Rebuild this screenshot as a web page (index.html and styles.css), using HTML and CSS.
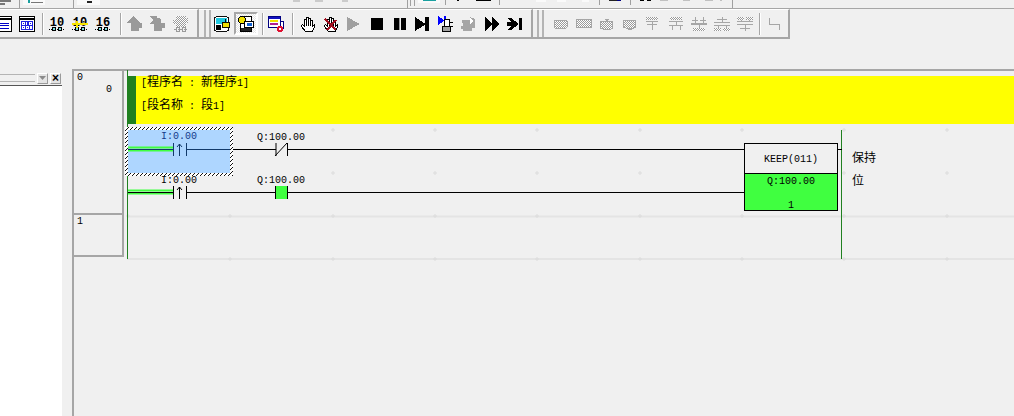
FILE: index.html
```html
<!DOCTYPE html>
<html lang="zh">
<head>
<meta charset="utf-8">
<title>Ladder</title>
<link rel="stylesheet" href="styles.css">
</head>
<body>
<svg width="0" height="0" class="defs">
  <defs>
    <g id="glasses">
      <path d="M0 13.500h16" stroke="#000" stroke-dasharray="1 1"/>
      <circle cx="5" cy="13" r="2" fill="#7fe0e0" stroke="#000"/>
      <circle cx="11" cy="13" r="2" fill="#7fe0e0" stroke="#000"/>
    </g>
    <g id="glasses-grey">
      <path d="M1 13h14" stroke="#9a9a9a" stroke-dasharray="1 1"/>
      <circle cx="5" cy="13.500" r="2" fill="none" stroke="#9a9a9a"/>
      <circle cx="11" cy="13.500" r="2" fill="none" stroke="#9a9a9a"/>
    </g>
    <g id="hand">
      <path d="M5.500 15.500L1.500 10.500V9.500L2.500 8.500L4.500 10.500V3.500H6.500V9.500V1.500H8.500V9.500V2.500H10.500V9.500V4.500H12.500V10.500L14.500 8.500V10.500L12.500 15.500z" fill="#fff" stroke="#000"/>
    </g>
    <pattern id="chk" width="2" height="2" patternUnits="userSpaceOnUse">
      <rect width="2" height="2" fill="#fff"/>
      <rect width="1" height="1" fill="#9a9a9a"/>
      <rect x="1" y="1" width="1" height="1" fill="#9a9a9a"/>
    </pattern>
    <pattern id="hatch" width="4" height="4" patternUnits="userSpaceOnUse">
      <rect width="4" height="4" fill="#fff"/>
      <path d="M0 4L4 0M-1 1L1 -1M3 5L5 3" stroke="#111" stroke-width="1"/>
    </pattern>
  </defs>
</svg>

<div class="top-strip">
  <svg class="top-bits" width="1014" height="8" viewBox="0 0 1014 8">
    <path d="M0 1h11M0 4h5" stroke="#000"/>
    <path d="M19.500 0v8M73.500 0v8M407.500 0v8" stroke="#a0a0a0"/>
    <rect x="23" y="0" width="22" height="5" fill="#fafafa"/>
    <rect x="28" y="0" width="2" height="3" fill="#1aa0a0"/>
    <rect x="31" y="2" width="12" height="1" fill="#777"/>
    <rect x="77" y="0" width="23" height="5" fill="#fafafa"/>
    <rect x="87" y="1" width="5" height="2" fill="#222"/>
    <path d="M293 1h7M315 1h8M342 1h6" stroke="#a6a6a6"/>
    <path d="M410.500 0v6M414.500 0v6" stroke="#a0a0a0"/>
    <rect x="418" y="0" width="22" height="3" fill="#fafafa"/>
    <rect x="423" y="0" width="13" height="1" fill="#1aa0a0"/>
    <path d="M445.500 0v5M499.500 0v5M599.500 0v5M630.500 0v5" stroke="#a0a0a0"/>
    <rect x="457" y="0" width="2" height="1" fill="#000"/>
    <rect x="476" y="0" width="15" height="1" fill="#000"/>
    <path d="M536 1h10M557 1h9M582 1h7" stroke="#fafafa" stroke-width="2"/>
    <rect x="609" y="0" width="8" height="1" fill="#222"/>
    <rect x="617" y="0" width="4" height="1" fill="#000080"/>
    <rect x="640" y="0" width="4" height="1" fill="#000"/>
    <rect x="647" y="0" width="4" height="1" fill="#000"/>
    <path d="M660 0h8M683 0h7M705 0h8M720 0h2" stroke="#c0c0c0" stroke-width="2"/>
    <path d="M732.500 0v8" stroke="#a0a0a0"/>
  </svg>
</div>

<div class="toolbars">
  <div class="tb tb-a">
    <div class="cluster first">
      <svg class="ic" viewBox="0 0 16 16"><rect x=".5" y=".5" width="15" height="15" fill="#fff" stroke="#000"/><path d="M1 3h14" stroke="#000" stroke-width="2"/><path d="M3 7.500h10M3 9.500h10M3 12.500h10" stroke="#0000c8"/></svg>
      <svg class="ic" viewBox="0 0 16 16"><rect x=".5" y=".5" width="15" height="15" fill="#fff" stroke="#000"/><path d="M1 3h14" stroke="#000" stroke-width="2"/><rect x="2" y="5" width="12" height="9" fill="#2020e0"/><path d="M3.500 6.500h2v2h-2zM7.500 6v3M10.500 6.500h2v2h-2zM3.500 10.500h2v2h-2zM7.500 10.500h2v2h-2zM11.500 10.500h1v2h-1z" stroke="#fff" fill="none"/></svg>
    </div>
    <span class="sep l7"></span>
    <div class="cluster r5">
      <svg class="ic" viewBox="0 0 16 16"><text x="8" y="9.500" class="num">10</text><use href="#glasses"/></svg>
      <svg class="ic" viewBox="0 0 16 16"><text x="8" y="9.500" class="num">10</text><use href="#glasses"/><path d="M0 8h16M5 5v7" stroke="#f5e400" stroke-width="2"/></svg>
      <svg class="ic" viewBox="0 0 16 16"><text x="8" y="9.500" class="num">16</text><use href="#glasses"/></svg>
    </div>
    <span class="sep l9"></span>
    <div class="cluster r5">
      <svg class="ic" viewBox="0 0 16 16"><path d="M6 0l7 6-1 1h3v5h-3v3H4V7H0z" fill="#9a9a9a"/></svg>
      <svg class="ic" viewBox="0 0 16 16"><path d="M0 0h7v2h3l1 2v3h4v5h-3v3H4V8H0l3-4z" fill="#9a9a9a"/></svg>
      <svg class="ic" viewBox="0 0 16 16"><path d="M3 0h10v2h2v5h-2v4H3V8H0V4h3z" fill="url(#chk)"/><use href="#glasses-grey"/></svg>
    </div>
  </div>

  <div class="tb tb-b">
    <span class="grips"></span>
    <svg class="ic" viewBox="0 0 17 16"><rect x=".5" y=".5" width="15" height="15" rx="2" fill="#fff" stroke="#000"/><rect x="2" y="2" width="12" height="6" fill="#20c8e0"/><path d="M2 9h5v5H2z" fill="#000"/><rect x="9" y="6" width="7" height="6" fill="#f0e000" stroke="#000"/><path d="M12 6V3" stroke="#000"/></svg>
    <span class="pressed">
      <svg class="ic" viewBox="0 0 16 16"><rect x="2.500" y=".5" width="11" height="15" fill="#fff" stroke="#000"/><circle cx="4" cy="4" r="3.500" fill="#f0e000" stroke="#000"/><rect x="6.500" y="5.500" width="9" height="6" fill="#fff" stroke="#000"/><rect x="9" y="7" width="5" height="3" fill="#1060d0"/><path d="M3 12h10v3H3z" fill="#222"/></svg>
    </span>
    <span class="sep l4"></span>
    <svg class="ic icon-db" viewBox="0 0 16 16"><rect x=".5" y=".5" width="12" height="11" fill="#fff" stroke="#000080"/><rect x="1" y="1" width="11" height="2" fill="#1010c0"/><rect x="2" y="4" width="8" height="2" fill="#f0e000"/><rect x="2" y="7" width="8" height="2" fill="#b02090"/><rect x="12.500" y="5.500" width="3" height="7" fill="#fff" stroke="#000080"/><circle cx="12" cy="13" r="3" fill="#e01030"/><path d="M11 12l2 2M13 12l-2 2" stroke="#fff"/></svg>
    <span class="sep l8"></span>
    <div class="cluster r-none">
      <svg class="ic" viewBox="0 0 16 16"><use href="#hand"/></svg>
      <svg class="ic" viewBox="0 0 16 16"><use href="#hand"/><path d="M2 3l11 11M13 4L4 14" stroke="#a01020" stroke-width="2"/></svg>
      <svg class="ic" viewBox="0 0 16 16"><path d="M1 1l13 7-13 7z" fill="#a0a0a0"/></svg>
      <svg class="ic" viewBox="0 0 16 16"><rect x="2" y="2" width="12" height="12" fill="#000"/></svg>
      <svg class="ic" viewBox="0 0 16 16"><rect x="2" y="2" width="5" height="12" fill="#000"/><rect x="9" y="2" width="5" height="12" fill="#000"/><path d="M7.500 2v12" stroke="#999"/></svg>
      <svg class="ic" viewBox="0 0 16 16"><path d="M0 1l10 6.500V1h4v14h-4V9L0 15z" fill="#000"/></svg>
      <svg class="ic" viewBox="0 0 16 16"><path d="M0 0l6 4v-4h2v9H6V5l-6 4z" fill="#0000ff"/><path d="M6.500 3.500h5v10h-5z" fill="#fff" stroke="#000"/><rect x="4" y="10" width="8" height="5" fill="#a0a0a0" stroke="#000"/><path d="M12 6h3M12 10h3" stroke="#000"/></svg>
      <svg class="ic" viewBox="0 0 16 16"><path d="M1 4h8V1l5 2v9h-3v3H2v-2H0v-3h2z" fill="#a6a6a6"/><path d="M9 2l3 3-3 3z" fill="#fff"/></svg>
      <svg class="ic" viewBox="0 0 16 16"><path d="M1 1l7 7-7 7zM8 1l7 7-7 7z" fill="#000"/></svg>
      <svg class="ic" viewBox="0 0 16 16"><path d="M0 2h4l8 6-8 6H0l5-4H0V6h5z" fill="#000"/><rect x="12" y="2" width="3" height="12" fill="#000"/></svg>
    </div>
  </div>

  <div class="tb tb-c">
    <span class="grips"></span>
    <div class="cluster first-c">
      <svg class="ic" viewBox="0 0 16 16"><rect x="1" y="4" width="13" height="8" rx="1" fill="url(#chk)" stroke="#a6a6a6"/></svg>
      <svg class="ic" viewBox="0 0 16 16"><rect x="0.500" y="3.500" width="15" height="8" rx="1" fill="url(#chk)" stroke="#a6a6a6"/></svg>
      <svg class="ic" viewBox="0 0 16 16"><rect x="1.500" y="5" width="12" height="8" rx="2" fill="url(#chk)" stroke="#a6a6a6"/><path d="M5 3h5l-2 2z" fill="#a6a6a6"/></svg>
      <svg class="ic" viewBox="0 0 16 16"><rect x="1.500" y="4" width="12" height="8" rx="2" fill="url(#chk)" stroke="#a6a6a6"/><path d="M5 14h5l-2-2z" fill="#a6a6a6"/></svg>
      <svg class="ic" viewBox="0 0 16 16"><rect x="1" y="1" width="12" height="3" fill="url(#chk)"/><path d="M1 5.500h12M2 8.500h10M7 5v9" stroke="#a6a6a6"/></svg>
      <svg class="ic" viewBox="0 0 16 16"><rect x="2" y="1" width="12" height="3" fill="url(#chk)"/><path d="M1 5.500h14M1 9.500h14M8 5v5M4 10v4M12 10v4" stroke="#a6a6a6"/></svg>
      <svg class="ic" viewBox="0 0 16 16"><path d="M4 1v6M12 1v6M1 4h6M9 4h6" stroke="#a6a6a6"/><rect x="0" y="6.500" width="16" height="2" fill="#a6a6a6"/><path d="M8 8v4" stroke="#a6a6a6"/><rect x="2" y="12" width="12" height="3" fill="url(#chk)"/></svg>
      <svg class="ic" viewBox="0 0 16 16"><path d="M8 1v5M3 3.500h10M0 6.500h16M0 9h16M4 9v3M12 9v3" stroke="#a6a6a6"/><rect x="0" y="12" width="7" height="3" fill="url(#chk)"/><rect x="9" y="12" width="7" height="3" fill="url(#chk)"/></svg>
      <svg class="ic" viewBox="0 0 16 16"><rect x="0" y="1" width="7" height="3" fill="url(#chk)"/><rect x="9" y="1" width="7" height="3" fill="url(#chk)"/><path d="M0 5.500h16M0 8.500h16M8 9v6M3 12.500h10M4 4v1M12 4v1" stroke="#a6a6a6"/></svg>
    </div>
    <span class="sep l6"></span>
    <svg class="ic icon-corner" viewBox="0 0 16 16"><path d="M2.500 2v6.500h9.500V14" fill="none" stroke="#a6a6a6"/></svg>
  </div>
</div>

<main class="workspace">
  <aside class="side">
    <div class="side-head">
      <span class="side-grip"></span>
      <span class="side-btn">
        <svg width="7" height="4" viewBox="0 0 7 4"><path d="M0 0h7L3.500 4z" fill="#8a8a8a"/></svg>
      </span>
      <span class="side-btn side-close">×</span>
    </div>
    <div class="side-body"></div>
  </aside>

  <div class="rows">
    <div class="row-head row-0">
      <span class="rung-no">0</span>
      <span class="step-no">0</span>
    </div>
    <div class="row-head row-1">
      <span class="rung-no">1</span>
    </div>
  </div>

  <svg class="ladder" width="890" height="347" viewBox="124 69 890 347">
    <path d="M124 70H1014" stroke="#a6a6a6" stroke-width="2"/>
    <!-- grid -->
    <path d="M127 216.500H1014M127 259H1014" class="grid-line" stroke-width="2"/>
    <path class="grid-mark" d="M128 128v4M126 130h4M230 128v4M228 130h4M333 128v4M331 130h4M435 128v4M433 130h4M537 128v4M535 130h4M640 128v4M638 130h4M742 128v4M740 130h4M844 128v4M842 130h4M947 128v4M945 130h4
      M230 171v4M228 173h4M333 171v4M331 173h4M435 171v4M433 173h4M537 171v4M535 173h4M640 171v4M638 173h4M844 171v4M842 173h4M947 171v4M945 173h4
      M128 214v4M126 216h4M230 214v4M228 216h4M333 214v4M331 216h4M435 214v4M433 216h4M537 214v4M535 216h4M640 214v4M638 216h4M742 214v4M740 216h4M844 214v4M842 216h4M947 214v4M945 216h4
      M230 257v4M228 259h4M333 257v4M331 259h4M435 257v4M433 259h4M537 257v4M535 259h4M640 257v4M638 259h4M742 257v4M740 259h4M844 257v4M842 259h4M947 257v4M945 259h4"/>

    <!-- section header -->
    <rect x="128" y="76" width="886" height="48" fill="#ffff00"/>
    <rect x="128" y="76" width="8" height="48" fill="#208020"/>
    <text x="141" y="86" class="latin">[<tspan class="cjk">程序名</tspan> : <tspan class="cjk">新程序</tspan>1]</text>
    <text x="141" y="109" class="latin">[<tspan class="cjk">段名称</tspan> : <tspan class="cjk">段</tspan>1]</text>

    <!-- buses -->
    <path d="M127.500 70V259M841.500 130V259" stroke="#208020" fill="none"/>

    <!-- rung 1, second line labels before the selection hatch -->
    <text x="179" y="183" class="latin middle">I:0.00</text>
    <text x="281" y="183" class="latin middle">Q:100.00</text>

    <!-- selection -->
    <rect x="125" y="127" width="108" height="49" fill="url(#hatch)"/>
    <rect x="128" y="130" width="102" height="43" fill="#aed6ff"/>

    <!-- first line -->
    <text x="179" y="139" class="latin middle sel-text">I:0.00</text>
    <text x="281" y="140" class="latin middle">Q:100.00</text>
    <path d="M128 147.500h45M128 150.500h45" stroke="#40ff40" stroke-width="2"/>
    <path d="M128 149.500h45" stroke="#123a6a"/>
    <path d="M173.500 143v13M186.500 143v13M179.500 144v12M177 147l2.500-3 2.500 3M187 149.500h43" stroke="#123a6a" fill="none"/>
    <path d="M233 149.500h43M287 149.500H744" stroke="#000"/>
    <path d="M276 143v13M287.500 143v13M275 156l12-13" stroke="#000" fill="none"/>

    <!-- second line -->
    <path d="M128 190.500h45M128 193.500h45" stroke="#40ff40" stroke-width="2"/>
    <path d="M128 192.500h45" stroke="#000"/>
    <path d="M173.500 186v13M186.500 186v13M179.500 187v12M177 190l2.500-3 2.500 3M187 192.500h89M288 192.500H744" stroke="#000" fill="none"/>
    <rect x="276" y="186" width="12" height="13" fill="#40ff40"/>
    <path d="M275.500 186v13M287.500 186v13" stroke="#000"/>

    <!-- KEEP block -->
    <rect x="744.500" y="173.500" width="93" height="37" fill="#40ff40"/>
    <rect x="744.500" y="143.500" width="93" height="67" fill="none" stroke="#000"/>
    <path d="M744 173.500h94M838 149.500h4" stroke="#000"/>
    <text x="791" y="162" class="latin middle">KEEP(011)</text>
    <text x="791" y="184" class="latin middle">Q:100.00</text>
    <text x="791" y="208" class="latin middle">1</text>
    <text x="852" y="162" class="comment">保持</text>
    <text x="852" y="185" class="comment">位</text>
  </svg>
</main>
</body>
</html>
```
FILE: styles.css
```css
* { box-sizing: border-box; }
html, body { margin: 0; padding: 0; }
body {
  width: 1014px;
  height: 416px;
  overflow: hidden;
  background: #f0f0f0;
  font-family: "Liberation Mono", "Noto Sans CJK SC", monospace;
  display: flex;
  flex-direction: column;
}
.defs { position: absolute; }

.top-strip { height: 9px; border-bottom: 1px solid #a6a6a6; flex: none; }
.top-bits { display: block; }

.toolbars { display: flex; height: 30px; flex: none; width: 790px; }
.tb {
  display: flex;
  align-items: center;
  height: 30px;
  padding-top: 0;
  border-top: 1px solid #fff;
  border-right: 2px solid #a6a6a6;
  border-bottom: 2px solid #a6a6a6;
}
.tb-a { width: 199px; }
.tb-b { width: 334px; padding-left: 5px; }
.tb-c { width: 257px; padding-left: 4px; }

.ic { width: 16px; height: 16px; flex: none; display: block; shape-rendering: crispEdges; }
.cluster { display: flex; gap: 7px; align-items: center; }
.first { margin-left: -4px; }
.first-c { margin-left: 6px; }
.r5 { margin-left: 5px; }
.r-none { margin-left: 6px; }
.sep { width: 2px; height: 22px; background: #a6a6a6; border-right: 1px solid #fff; flex: none; }
.l4 { margin-left: 4px; }
.l6 { margin-left: 6px; }
.l7 { margin-left: 7px; }
.l8 { margin-left: 8px; }
.l9 { margin-left: 9px; }
.icon-db { margin-left: 4px; }
.icon-corner { margin-left: 6px; }

.grips {
  width: 7px;
  height: 27px;
  flex: none;
  margin-right: 3px;
  border-left: 2px solid #b4b4b4;
  border-right: 2px solid #b4b4b4;
}
.pressed {
  width: 24px;
  height: 23px;
  flex: none;
  margin-left: 4px;
  display: flex;
  align-items: center;
  justify-content: center;
  background: repeating-conic-gradient(#e4e4e4 0 25%, #fff 0 50%) 0 0 / 2px 2px;
  border: 2px solid #a6a6a6;
  border-right-color: #fff;
  border-bottom-color: #fff;
}

.workspace {
  margin-top: 30px;
  flex: 1;
  display: flex;
  min-height: 0;
}
.side { width: 72px; flex: none; padding-top: 3px; }
.side-head { height: 12px; display: flex; align-items: center; gap: 2px; padding-right: 11px; }
.side-grip { flex: 1; height: 8px; border-top: 1px solid #b4b4b4; border-bottom: 1px solid #b4b4b4; }
.side-btn {
  width: 11px;
  height: 11px;
  display: flex;
  align-items: center;
  justify-content: center;
  background: #e4e4e4;
  border: 1px solid #9a9a9a;
  border-top-color: #fff;
  border-left-color: #fff;
}
.side-close { font: bold 12px/1 "Liberation Sans", sans-serif; color: #000; }
.side-body {
  width: 62px;
  height: 331px;
  margin-top: 1px;
  background: #fff;
  border-top: 1px solid #555;
}

.rows {
  width: 52px;
  flex: none;
  border-left: 2px solid #a6a6a6;
  border-top: 2px solid #a6a6a6;
  align-self: stretch;
}
.row-head { width: 50px; border-right: 2px solid #a6a6a6; border-bottom: 2px solid #a6a6a6; font-size: 10px; color: #000; }
.row-0 { height: 144px; }
.row-1 { height: 42px; }
.rung-no { display: block; padding: 1px 0 0 3px; line-height: 12px; }
.step-no { display: block; padding: 0 10px 0 0; text-align: right; line-height: 12px; }

.ladder { flex: none; display: block; overflow: hidden; }
.ladder text { font-family: "Liberation Mono", "Noto Sans CJK SC", monospace; fill: #000; }
.latin { font-size: 10px; }
.middle { text-anchor: middle; }
.cjk { font-family: "Noto Sans CJK SC", sans-serif; font-size: 12px; }
.ladder .comment { font-family: "Noto Sans CJK SC", sans-serif; font-size: 12px; }
.ladder .sel-text { fill: #123a8a; }
.grid-line { stroke: #e4e4e4; fill: none; }
.grid-mark { stroke: #dcdcdc; fill: none; }
.num { font: bold 12px "Liberation Mono", monospace; text-anchor: middle; fill: #000; }
```
